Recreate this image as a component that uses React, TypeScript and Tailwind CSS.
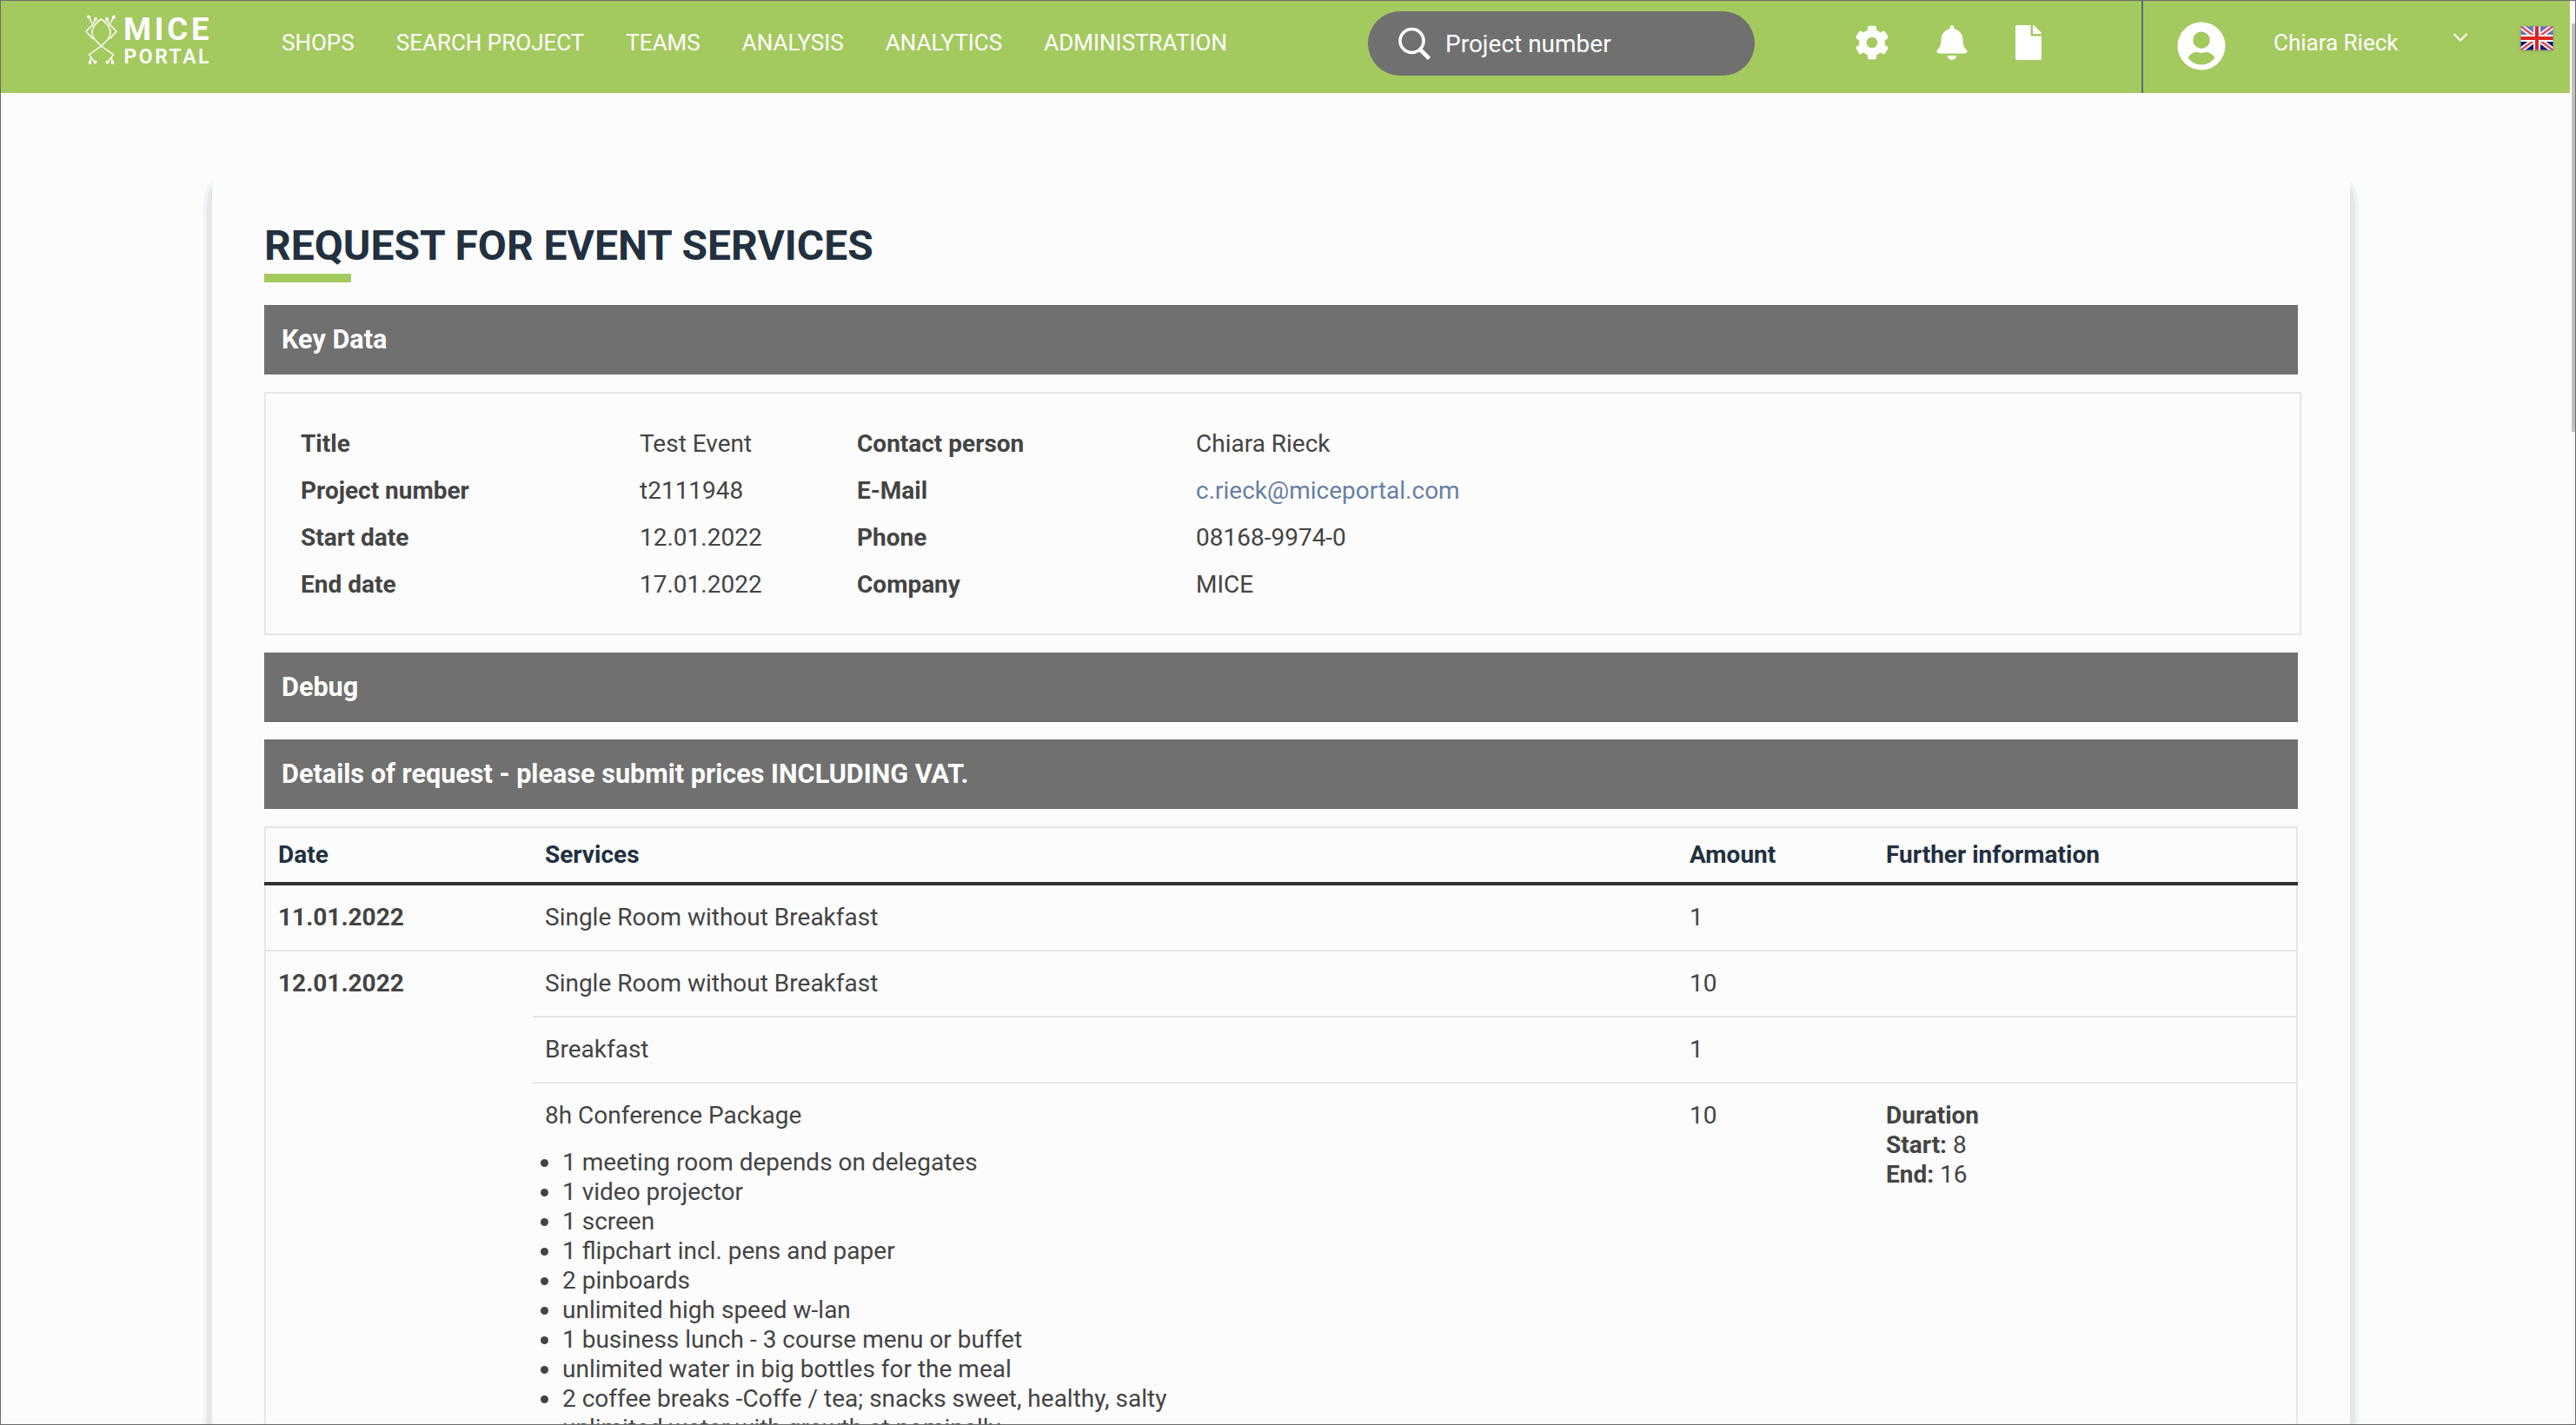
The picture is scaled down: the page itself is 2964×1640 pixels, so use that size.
import { FaBell, FaCog, FaFile } from 'react-icons/fa';

const navItems = [
  'SHOPS',
  'SEARCH PROJECT',
  'TEAMS',
  'ANALYSIS',
  'ANALYTICS',
  'ADMINISTRATION',
];

const keyData = [
  ['Title', 'Test Event', 'Contact person', 'Chiara Rieck'],
  ['Project number', 't2111948', 'E-Mail', 'c.rieck@miceportal.com'],
  ['Start date', '12.01.2022', 'Phone', '08168-9974-0'],
  ['End date', '17.01.2022', 'Company', 'MICE'],
];

const packageItems = [
  '1 meeting room depends on delegates',
  '1 video projector',
  '1 screen',
  '1 flipchart incl. pens and paper',
  '2 pinboards',
  'unlimited high speed w-lan',
  '1 business lunch - 3 course menu or buffet',
  'unlimited water in big bottles for the meal',
  '2 coffee breaks -Coffe / tea; snacks sweet, healthy, salty',
  'unlimited water with growth at nominally',
];

type Service = {
  name: string;
  amount: number;
  items?: string[];
  duration?: { start: number; end: number };
};

const days: { date: string; services: Service[] }[] = [
  {
    date: '11.01.2022',
    services: [{ name: 'Single Room without Breakfast', amount: 1 }],
  },
  {
    date: '12.01.2022',
    services: [
      { name: 'Single Room without Breakfast', amount: 10 },
      { name: 'Breakfast', amount: 1 },
      {
        name: '8h Conference Package',
        amount: 10,
        items: packageItems,
        duration: { start: 8, end: 16 },
      },
    ],
  },
];

const Logo = () => (
  <svg className="ml-[95px] mt-[12px] h-[66px] w-[150px] shrink-0" viewBox="96 13 150 66">
    <g fill="none" stroke="#fff" strokeWidth="1.5">
      <path d="M102 19l4 8M110 22l-3 6-8 8 8 9M131 19l-4 8M123 22l3 6 8 8-8 9" />
      <path d="M116.500 22c-5 3-10 9-10.500 14-.5 8 5 11 10.500 17l14 10-6 8M116.500 22c5 3 10 9 10.500 14 .5 8-5 11-10.500 17l-14 10 6 8" />
      <path d="M105 66l-2 6M128 66l2 6" />
    </g>
    <g fill="#fff">
      <circle cx="102" cy="19.500" r="1.900" />
      <circle cx="110" cy="22" r="1.900" />
      <circle cx="131" cy="19.500" r="1.900" />
      <circle cx="123" cy="22" r="1.900" />
      <circle cx="103.500" cy="72" r="1.900" />
      <circle cx="109.500" cy="71.500" r="1.900" />
      <circle cx="123.500" cy="71.500" r="1.900" />
      <circle cx="129.500" cy="72" r="1.900" />
    </g>
    <text x="142" y="46" textLength="98.500" fill="#fff" fontFamily="Roboto, sans-serif" fontSize="36.500" fontWeight="700">
      MICE
    </text>
    <text x="142.500" y="72.500" textLength="98" fill="#fff" fontFamily="Roboto, sans-serif" fontSize="23" fontWeight="600">
      PORTAL
    </text>
  </svg>
);

const Avatar = () => (
  <svg className="ml-[39px] h-[56px] w-[56px]" viewBox="0 0 56 56">
    <path
      fill="#fff"
      fillRule="evenodd"
      d="M28 .5a27.500 27.500 0 1 0 0 55 27.500 27.500 0 0 0 0-55zM28 11.500a9.700 9.700 0 1 1 0 19.400 9.700 9.700 0 0 1 0-19.400zM12.500 41.500c2-4 6-6.500 10.500-6.500 2 0 3 1 5 1s3-1 5-1c4.500 0 8.500 2.500 10.500 6.500-4 5.200-9 8-15.500 8s-11.500-2.800-15.500-8z"
    />
  </svg>
);

const Flag = () => (
  <svg className="ml-[60px] mt-[29px] h-[28px] w-[38px] self-start shadow" viewBox="0 0 38 28">
    <path fill="#14196b" d="M0 0h38v28H0z" />
    <path fill="#6f74ae" d="M0 0h38v12H0z" />
    <path stroke="#fff" strokeWidth="6" d="M0 0l38 28M38 0L0 28" />
    <path stroke="#e0474f" strokeWidth="2.500" d="M0 0l38 28M38 0L0 28" />
    <path stroke="#fff" strokeWidth="8" d="M19 0v28M0 14h38" />
    <path stroke="#dc2626" strokeWidth="4" d="M19 0v28M0 14h38" />
    <path fill="none" stroke="#8d93b5" strokeOpacity=".6" d="M.5.5h37v27H.5z" />
  </svg>
);

const Header = () => (
  <header className="flex h-[106px] bg-[#a4c95f] text-[26px] text-white">
    <Logo />
    <nav className="ml-[78px] flex h-[96px] items-center gap-[48px]">
      {navItems.map(item => (
        <a key={item} className="whitespace-nowrap">
          {item}
        </a>
      ))}
    </nav>
    <div className="ml-auto flex h-full">
      <div className="mt-[12px] flex h-[74px] w-[445px] items-center rounded-full bg-[#707070] pl-[35px]">
        <svg className="h-[38px] w-[38px]" viewBox="0 0 38 38" fill="none" stroke="#fff">
          <circle cx="15.500" cy="16" r="13.500" strokeWidth="3.600" />
          <path d="M25 26l10.500 10.500" strokeWidth="4.600" />
        </svg>
        <span className="ml-[16px] pt-[2px] text-[28px]">Project number</span>
      </div>
      <div className="ml-[115px] flex h-[96px] items-center text-[40px]">
        <FaCog />
        <FaBell className="ml-[52px]" />
        <FaFile className="ml-[48px]" />
      </div>
      <div className="ml-[110px] flex h-full w-[493px] border-l-2 border-[#4d6d86]">
        <div className="flex h-[104px] items-center">
          <Avatar />
        </div>
        <span className="ml-[55px] flex h-[96px] items-center">Chiara Rieck</span>
        <svg className="ml-[62px] mt-[36px] h-[12px] w-[18px]" viewBox="0 0 18 12" fill="none">
          <path stroke="#fff" strokeWidth="2" d="M1.500 2L9 9.500 16.500 2" />
        </svg>
        <Flag />
      </div>
    </div>
  </header>
);

const SectionBar = ({ title }: { title: string }) => (
  <h2 className="mb-5 flex h-20 items-center bg-[#707070] pl-5 text-[30.6px] font-bold text-white">
    {title}
  </h2>
);

const ServiceRow = ({ service, first }: { service: Service; first: boolean }) => (
  <div className={first ? 'flex py-5' : 'flex border-t-2 border-[#e6e6e6] py-5'}>
    <div className="w-[1317px] pl-[14px]">
      {service.name}
      {service.items && (
        <ul className="mt-5">
          {service.items.map(item => (
            <li key={item} className="flex items-center whitespace-nowrap">
              <span className="-ml-[5px] mr-[16px] h-[9px] w-[9px] rounded-full bg-[#444]" />
              {item}
            </li>
          ))}
        </ul>
      )}
    </div>
    <div className="w-[225px] pl-[14px]">{service.amount}</div>
    {service.duration && (
      <div className="pl-[15px]">
        <b>Duration</b>
        <br />
        <b>Start:</b> {service.duration.start}
        <br />
        <b>End:</b> {service.duration.end}
      </div>
    )}
  </div>
);

export default function App() {
  return (
    <div className="flex h-[1640px] w-[2964px] overflow-hidden border border-[#6b6b6b] bg-[#fcfcfc] font-[Roboto,sans-serif] text-[28px] leading-[34px] text-[#444]">
      <div className="w-[2956px] shrink-0">
        <Header />
        <main className="mt-[103px] flex pl-[233px]">
          <div className="h-[1500px] w-[10px] overflow-hidden rounded-tl-[10px_32px] bg-[#eef4f5] pl-1 pt-1.5">
            <div className="h-full rounded-tl-[6px_30px] bg-[#e5e7e6]" />
          </div>
          <div className="w-[2460px] shrink-0 px-[60px] pt-[41px]">
            <h1 className="text-[48px] font-bold leading-[64px] text-[#22303f]">
              REQUEST FOR EVENT SERVICES
            </h1>
            <div className="mb-[26px] h-[10px] w-[100px] bg-[#a4c95f]" />
            <SectionBar title="Key Data" />
            <div className="mb-5 w-[2344px] border-2 border-[#e6e6e6] pb-[29px] pl-10 pt-[31px]">
              {keyData.map(([label, value, label2, value2]) => (
                <div key={label} className="flex h-[54px] items-center">
                  <b className="w-[390px]">{label}</b>
                  <span className="w-[250px]">{value}</span>
                  <b className="w-[390px]">{label2}</b>
                  <span className={value2.includes('@') ? 'text-[#6680a3]' : ''}>{value2}</span>
                </div>
              ))}
            </div>
            <SectionBar title="Debug" />
            <SectionBar title="Details of request - please submit prices INCLUDING VAT." />
            <div className="border-2 border-b-0 border-[#e6e6e6]">
              <div className="-mx-[2px] flex border-b-4 border-[#333] px-[2px] py-[14px] font-bold text-[#22303f]">
                <span className="w-[307px] pl-[14px]">Date</span>
                <span className="w-[1317px] pl-[14px]">Services</span>
                <span className="w-[225px] pl-[14px]">Amount</span>
                <span className="pl-[15px]">Further information</span>
              </div>
              {days.map((day, i) => (
                <div key={day.date} className={i > 0 ? 'flex border-t-2 border-[#e6e6e6]' : 'flex'}>
                  <b className="w-[307px] py-5 pl-[14px]">{day.date}</b>
                  <div className="flex-1">
                    {day.services.map((service, j) => (
                      <ServiceRow key={service.name} service={service} first={j === 0} />
                    ))}
                  </div>
                </div>
              ))}
            </div>
          </div>
          <div className="h-[1500px] w-[10px] overflow-hidden rounded-tr-[10px_32px] bg-[#eef4f5] pr-1 pt-1.5">
            <div className="h-full rounded-tr-[6px_30px] bg-[#e5e7e6]" />
          </div>
        </main>
      </div>
      {/* scrollbar */}
      <div className="flex-1 bg-[#fcfcfc] pl-[2px] pt-[26px]">
        <div className="h-[470px] bg-[#c1c1c1]" />
      </div>
    </div>
  );
}
